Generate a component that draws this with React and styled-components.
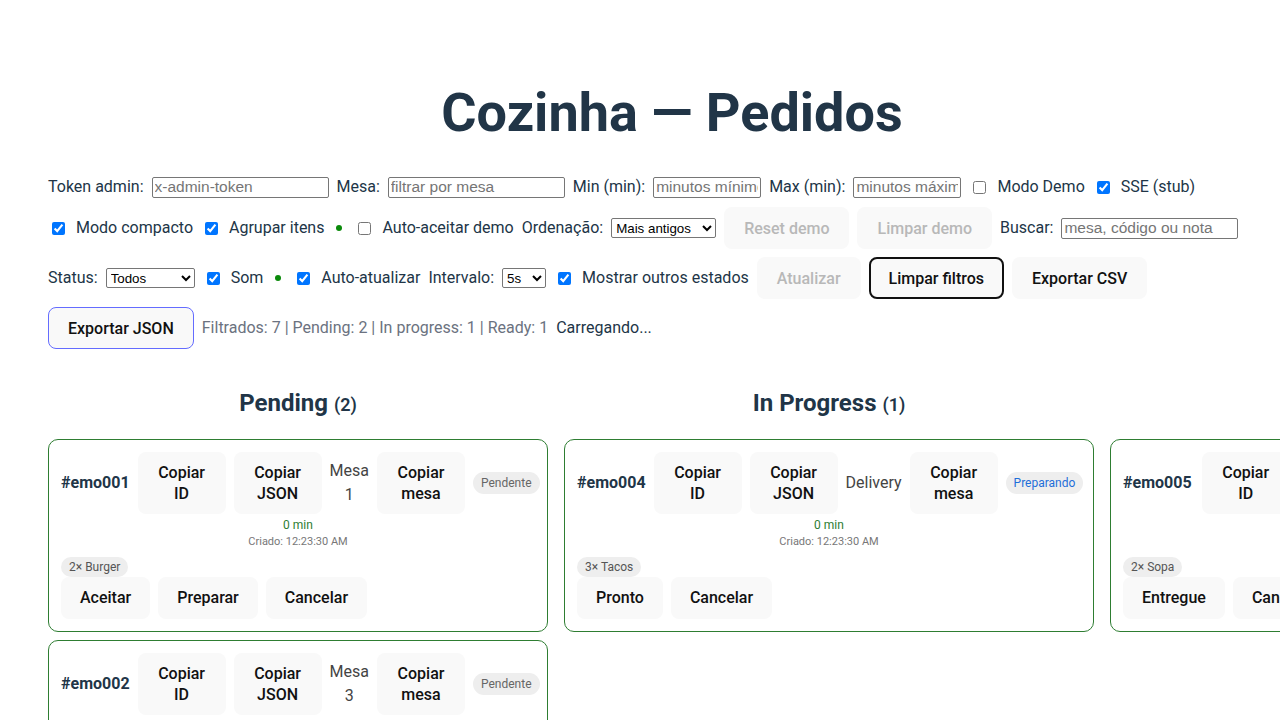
import styled, { createGlobalStyle } from "styled-components";

const GlobalStyle = createGlobalStyle`
  html, body {
    margin: 0;
    overflow: hidden;
  }
  body {
    font-family: Roboto, "Noto Sans", sans-serif;
    font-size: 16px;
    line-height: 1.5;
    color: #213547;
    background: #ffffff;
  }
`;

// Seite mit Titel, Filterleiste und Board
const Page = styled.div`
  width: 1248px;
  padding: 83px 48px 0;
`;

const Title = styled.h1`
  margin: 0 0 33px;
  font-size: 54px;
  line-height: 1.1;
  font-weight: 700;
  text-align: center;
`;

const Toolbar = styled.div`
  display: flex;
  flex-direction: column;
  gap: 8px;
`;

const Row = styled.div`
  display: flex;
  align-items: center;
  gap: 8px;
  white-space: nowrap;
`;

const Label = styled.span`
  color: #213547;
  font-size: 16px;
`;

const TextInput = styled.input`
  box-sizing: border-box;
  width: ${(p) => p.$width || "177px"};
  height: 21px;
  padding: 0 2px;
  border: 1px solid #767676;
  border-radius: 2px;
  font-family: "Liberation Sans", Arial, sans-serif;
  font-size: 15.5px;
  &::placeholder {
    color: #757575;
  }
`;

const Select = styled.select`
  box-sizing: border-box;
  width: ${(p) => p.$width};
  height: 20px;
  font-family: "Liberation Sans", Arial, sans-serif;
  font-size: 13.33px;
  color: #000;
  border: 1px solid #767676;
  border-radius: 2px;
  background: #fff;
`;

const Check = styled.input.attrs({ type: "checkbox" })`
  margin: 3px 3px 3px 4px;
  width: 13px;
  height: 13px;
`;

const Dot = styled.span`
  display: inline-block;
  width: 6px;
  height: 6px;
  margin: 0 4px;
  border-radius: 50%;
  background: #0a8a0a;
`;

const Button = styled.button`
  box-sizing: border-box;
  height: 42px;
  padding: 0 19px;
  border: 1px solid ${(p) => (p.$hover ? "#646cff" : "transparent")};
  border-radius: 8px;
  background: #f9f9f9;
  font-family: inherit;
  font-size: 16px;
  font-weight: 500;
  color: #111;
  cursor: pointer;
  outline: ${(p) => (p.$focus ? "2px solid #111" : "none")};
  outline-offset: -2px;
  &:disabled {
    color: #b8b8b8;
    cursor: default;
  }
`;

const Stats = styled.span`
  color: #6b7280;
  font-size: 16px;
`;

// Board mit den Spalten
const Board = styled.div`
  display: flex;
  align-items: flex-start;
  gap: 16px;
  margin-top: 16px;
`;

const Column = styled.section`
  flex: none;
  width: ${(p) => p.$width};
  display: flex;
  flex-direction: column;
  gap: 8px;
`;

const ColumnTitle = styled.h2`
  margin: 20px 0 10px;
  font-size: 24px;
  line-height: 1.5;
  font-weight: 700;
  text-align: center;
  small {
    font-size: 18px;
    font-weight: 600;
  }
`;

const Card = styled.article`
  border: 1px solid #2e7d32;
  border-radius: 10px;
  padding: 12px;
  display: flex;
  flex-direction: column;
`;

const CardHead = styled.div`
  display: flex;
  align-items: center;
  justify-content: space-between;
  gap: 8px;
`;

const OrderId = styled.strong`
  flex: none;
  font-size: 16px;
  font-weight: 700;
`;

const SmallButton = styled(Button)`
  flex: none;
  width: 88px;
  height: 62px;
  padding: 0 12px;
  line-height: 21px;
`;

const TableInfo = styled.span`
  flex: none;
  width: min-content;
  text-align: center;
  color: #444;
`;

const Badge = styled.span`
  flex: none;
  padding: 2px 8px;
  border-radius: 999px;
  background: #eeeeee;
  font-size: 12px;
  line-height: 18px;
  color: ${(p) => p.$color || "#666"};
`;

const Meta = styled.div`
  margin-top: ${(p) => p.$gap || "0"};
  text-align: center;
  font-size: ${(p) => p.$size};
  line-height: 1.5;
  color: ${(p) => p.$color};
`;

const Items = styled.div`
  display: flex;
  gap: 6px;
  margin-top: 6px;
`;

const ItemPill = styled(Badge)`
  color: #555;
  line-height: 16px;
`;

const Actions = styled.div`
  display: flex;
  gap: 8px;
`;

const ActionButton = styled(Button)`
  padding: 0 18px;
`;

const badgeColors = {
  Pendente: "#666",
  Preparando: "#1e6fd9",
  Pronto: "#2e7d32",
};

const OrderCard = ({ id, table, status, items, actions }) => (
  <Card>
    <CardHead>
      <OrderId>#{id}</OrderId>
      <SmallButton>Copiar ID</SmallButton>
      <SmallButton>Copiar JSON</SmallButton>
      <TableInfo>{table}</TableInfo>
      <SmallButton>Copiar mesa</SmallButton>
      <Badge $color={badgeColors[status]}>{status}</Badge>
    </CardHead>
    <Meta $gap="2px" $size="12px" $color="#2e7d32">0 min</Meta>
    <Meta $size="11px" $color="#777">Criado: 12:23:30 AM</Meta>
    <Items>
      {items.map((it) => (
        <ItemPill key={it}>{it}</ItemPill>
      ))}
    </Items>
    <Actions>
      {actions.map((a) => (
        <ActionButton key={a}>{a}</ActionButton>
      ))}
    </Actions>
  </Card>
);

const columns = [
  {
    title: "Pending",
    width: "500px",
    orders: [
      { id: "emo001", table: "Mesa 1", status: "Pendente", items: ["2× Burger"], actions: ["Aceitar", "Preparar", "Cancelar"] },
      { id: "emo002", table: "Mesa 3", status: "Pendente", items: ["1× Pizza"], actions: ["Aceitar", "Preparar", "Cancelar"] },
    ],
  },
  {
    title: "In Progress",
    width: "530px",
    orders: [
      { id: "emo004", table: "Delivery", status: "Preparando", items: ["3× Tacos"], actions: ["Pronto", "Cancelar"] },
    ],
  },
  {
    title: "Ready",
    width: "500px",
    orders: [
      { id: "emo005", table: "Mesa 2", status: "Pronto", items: ["2× Sopa"], actions: ["Entregue", "Cancelar"] },
    ],
  },
];

export default function App() {
  return (
    <>
      <GlobalStyle />
      <Page>
        <Title>Cozinha — Pedidos</Title>
        <Toolbar>
          <Row>
            <Label>Token admin:</Label>
            <TextInput placeholder="x-admin-token" />
            <Label>Mesa:</Label>
            <TextInput placeholder="filtrar por mesa" />
            <Label>Min (min):</Label>
            <TextInput $width="108px" placeholder="minutos mínimos" />
            <Label>Max (min):</Label>
            <TextInput $width="108px" placeholder="minutos máximos" />
            <Check />
            <Label>Modo Demo</Label>
            <Check defaultChecked />
            <Label>SSE (stub)</Label>
          </Row>
          <Row>
            <Check defaultChecked />
            <Label>Modo compacto</Label>
            <Check defaultChecked />
            <Label>Agrupar itens</Label>
            <Dot />
            <Check />
            <Label>Auto-aceitar demo</Label>
            <Label>Ordenação:</Label>
            <Select $width="105px" defaultValue="old">
              <option value="old">Mais antigos</option>
              <option value="new">Mais recentes</option>
            </Select>
            <Button disabled>Reset demo</Button>
            <Button disabled>Limpar demo</Button>
            <Label>Buscar:</Label>
            <TextInput placeholder="mesa, código ou nota" />
          </Row>
          <Row>
            <Label>Status:</Label>
            <Select $width="89px" defaultValue="all">
              <option value="all">Todos</option>
            </Select>
            <Check defaultChecked />
            <Label>Som</Label>
            <Dot />
            <Check defaultChecked />
            <Label>Auto-atualizar</Label>
            <Label>Intervalo:</Label>
            <Select $width="44px" defaultValue="5">
              <option value="5">5s</option>
            </Select>
            <Check defaultChecked />
            <Label>Mostrar outros estados</Label>
            <Button disabled>Atualizar</Button>
            <Button $focus>Limpar filtros</Button>
            <Button>Exportar CSV</Button>
          </Row>
          <Row>
            <Button $hover>Exportar JSON</Button>
            <Stats>Filtrados: 7 | Pending: 2 | In progress: 1 | Ready: 1</Stats>
            <Label>Carregando...</Label>
          </Row>
        </Toolbar>
        <Board>
          {columns.map((col) => (
            <Column key={col.title} $width={col.width}>
              <ColumnTitle>
                {col.title} <small>({col.orders.length})</small>
              </ColumnTitle>
              {col.orders.map((o) => (
                <OrderCard key={o.id} {...o} />
              ))}
            </Column>
          ))}
        </Board>
      </Page>
    </>
  );
}
